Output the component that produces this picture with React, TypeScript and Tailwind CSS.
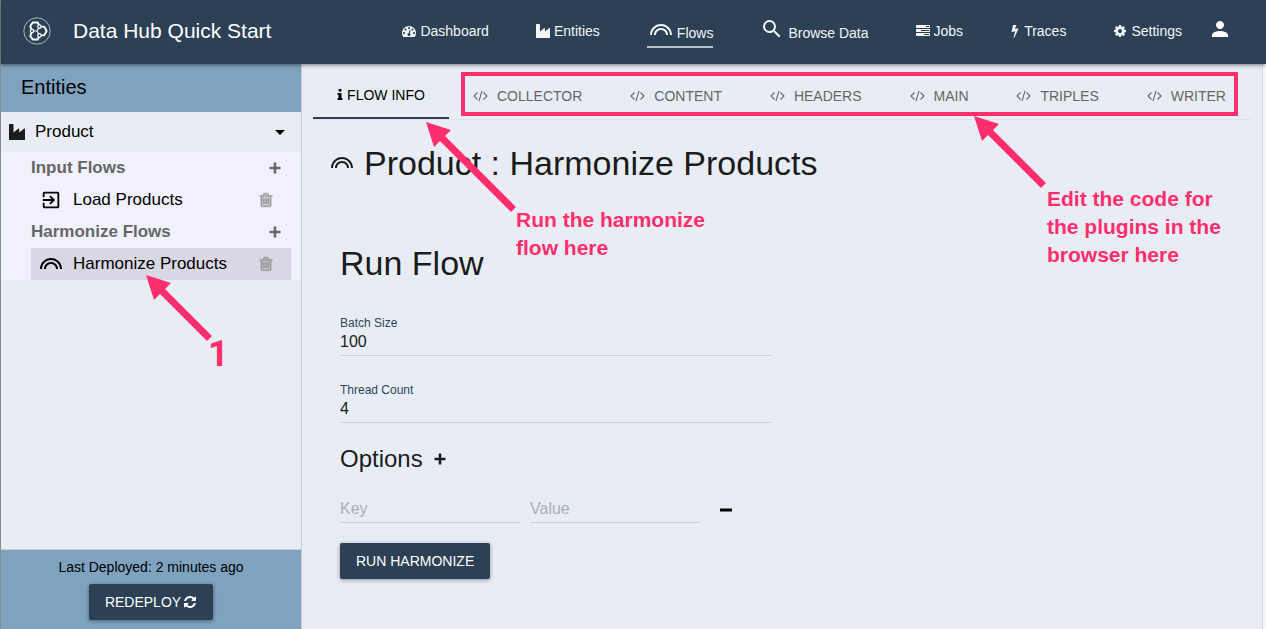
import { MdSearch, MdPerson, MdLooks, MdExitToApp } from "react-icons/md";
import type { ReactNode } from "react";

const FA = {
  dashboard:
    "M384 1152q0-53-37.5-90.5t-90.5-37.5-90.5 37.5-37.5 90.5 37.5 90.5 90.5 37.5 90.5-37.5 37.5-90.5zm192-448q0-53-37.5-90.5t-90.5-37.5-90.5 37.5-37.5 90.5 37.5 90.5 90.5 37.5 90.5-37.5 37.5-90.5zm428 481l101-382q6-26-7.5-48.5t-38.5-29.5-48 6.5-30 39.5l-101 382q-60 5-107 43.5t-63 98.5q-20 77 20 146t117 89 146-20 89-117q16-60-6-117t-72-91zm660-33q0-53-37.5-90.5t-90.5-37.5-90.5 37.5-37.5 90.5 37.5 90.5 90.5 37.5 90.5-37.5 37.5-90.5zm-640-640q0-53-37.5-90.5t-90.5-37.5-90.5 37.5-37.5 90.5 37.5 90.5 90.5 37.5 90.5-37.5 37.5-90.5zm448 192q0-53-37.5-90.5t-90.5-37.5-90.5 37.5-37.5 90.5 37.5 90.5 90.5 37.5 90.5-37.5 37.5-90.5zm320 448q0 261-141 483-19 29-54 29h-1402q-35 0-54-29-141-221-141-483 0-182 71-348t191-286 286-191 348-71 348 71 286 191 191 286 71 348z",
  tasks:
    "M1024 1408h640v-128h-640v128zm-384-512h1024v-128h-1024v128zm640-512h384v-128h-384v128zm512 832v256q0 26-19 45t-45 19h-1664q-26 0-45-19t-19-45v-256q0-26 19-45t45-19h1664q26 0 45 19t19 45zm0-512v256q0 26-19 45t-45 19h-1664q-26 0-45-19t-19-45v-256q0-26 19-45t45-19h1664q26 0 45 19t19 45zm0-512v256q0 26-19 45t-45 19h-1664q-26 0-45-19t-19-45v-256q0-26 19-45t45-19h1664q26 0 45 19t19 45z",
  bolt: "M1333 566q18 20 7 44l-540 1157q-13 25-42 25-4 0-14-2-17-5-25.5-19t-4.5-30l197-808-406 101q-4 1-12 1-18 0-31-11-18-15-13-39l201-825q4-16 16-26t28-10h328q19 0 32 12.5t13 29.5q0 8-5 18l-171 463 396-98q8-2 12-2 19 0 34 15z",
  cog: "M1152 896q0-106-75-181t-181-75-181 75-75 181 75 181 181 75 181-75 75-181zm512-109v222q0 12-8 23t-20 13l-185 28q-19 54-39 91 35 50 107 138 10 12 10 25t-9 23q-27 37-99 108t-94 71q-12 0-26-9l-138-108q-44 23-91 38-16 136-29 186-7 28-36 28h-222q-14 0-24.5-8.5t-11.5-21.5l-28-184q-49-16-90-37l-141 107q-10 9-25 9-14 0-25-11-126-114-165-168-7-10-7-23 0-12 8-23 15-21 51-66.5t54-70.5q-27-50-41-99l-183-27q-13-2-21-12.5t-8-23.5v-222q0-12 8-23t19-13l186-28q14-46 39-92-40-57-107-138-10-12-10-24 0-10 9-23 26-36 98.5-107.5t94.5-71.5q13 0 26 10l138 107q44-23 91-38 16-136 29-186 7-28 36-28h222q14 0 24.5 8.5t11.5 21.5l28 184q49 16 90 37l142-107q9-9 24-9 13 0 25 10 129 119 165 170 7 8 7 22 0 12-8 23-15 21-51 66.5t-54 70.5q26 50 41 98l183 28q13 2 21 12.5t8 23.5z",
  info: "M1216 1344v128q0 26-19 45t-45 19h-512q-26 0-45-19t-19-45v-128q0-26 19-45t45-19h64v-384h-64q-26 0-45-19t-19-45v-128q0-26 19-45t45-19h384q26 0 45 19t19 45v576h64q26 0 45 19t19 45zm-128-1152v192q0 26-19 45t-45 19h-256q-26 0-45-19t-19-45v-192q0-26 19-45t45-19h256q26 0 45 19t19 45z",
  trash:
    "M704 736v576q0 14-9 23t-23 9h-64q-14 0-23-9t-9-23v-576q0-14 9-23t23-9h64q14 0 23 9t9 23zm256 0v576q0 14-9 23t-23 9h-64q-14 0-23-9t-9-23v-576q0-14 9-23t23-9h64q14 0 23 9t9 23zm256 0v576q0 14-9 23t-23 9h-64q-14 0-23-9t-9-23v-576q0-14 9-23t23-9h64q14 0 23 9t9 23zm128 724v-948h-896v948q0 22 7 40.5t14.5 27 10.5 8.5h832q3 0 10.5-8.5t14.5-27 7-40.5zm-672-1076h448l-48-117q-7-9-17-11h-317q-10 2-17 11zm928 32v64q0 14-9 23t-23 9h-96v948q0 83-47 143.5t-113 60.5h-832q-66 0-113-58.5t-47-141.5v-952h-96q-14 0-23-9t-9-23v-64q0-14 9-23t23-9h309l70-167q15-37 54-63t79-26h320q40 0 79 26t54 63l70 167h309q14 0 23 9t9 23z",
  refresh:
    "M1639 1056q0 5-1 7-64 268-268 434.5t-478 166.5q-146 0-282.5-55t-243.5-157l-129 129q-19 19-45 19t-45-19-19-45v-448q0-26 19-45t45-19h448q26 0 45 19t19 45-19 45l-137 137q71 66 161 102t187 36q134 0 250-65t186-179q11-17 53-117 8-23 30-23h192q13 0 22.5 9.5t9.5 22.5zm25-800v448q0 26-19 45t-45 19h-448q-26 0-45-19t-19-45 19-45l138-138q-148-137-349-137-134 0-250 65t-186 179q-11 17-53 117-8 23-30 23h-199q-13 0-22.5-9.5t-9.5-22.5v-7q65-268 270-434.5t480-166.5q146 0 284 55.5t245 156.5l130-129q19-19 45-19t45 19 19 45z",
};

function Fa({ d, className }: { d: string; className: string }) {
  return (
    <svg viewBox="0 0 1792 1792" className={className} fill="currentColor" aria-hidden="true">
      <path d={d} />
    </svg>
  );
}

function Trash() {
  return (
    <svg viewBox="0 0 1792 1792" className="size-4" fill="currentColor" aria-hidden="true">
      <path d="M400 460h992v1120H400z" opacity=".35" />
      <path d={FA.trash} stroke="currentColor" strokeWidth="50" />
    </svg>
  );
}

function Industry({ className }: { className: string }) {
  return (
    <svg viewBox="0 0 16 16" className={className} fill="currentColor" aria-hidden="true">
      <path d="M0 .6Q0 0 .6 0h3.300q.6 0 .6.6v8l5-4q.7-.4.7.4v3.600l5-4q.8-.5.8.4V15.400q0 .6-.6.6H.6q-.6 0-.6-.6z" />
    </svg>
  );
}

function Plus({ className }: { className: string }) {
  return (
    <svg viewBox="0 0 12 12" className={className} fill="currentColor" aria-hidden="true">
      <path d="M4.700.5h2.600v4.200h4.200v2.600H7.300v4.200H4.700V7.300H.5V4.700h4.200z" />
    </svg>
  );
}

function Minus({ className }: { className: string }) {
  return (
    <svg viewBox="0 0 12 12" className={className} fill="currentColor" aria-hidden="true">
      <rect y="4.500" width="12" height="3" rx=".5" />
    </svg>
  );
}

function Code() {
  return (
    <svg viewBox="0 0 15 12" className="h-3 w-[15px]" fill="none" stroke="currentColor" strokeWidth="1.100" aria-hidden="true">
      <path d="M4.500 2.500 1 6l3.500 3.500M10.500 2.500 14 6l-3.500 3.500M9 .8 6 11.200" />
    </svg>
  );
}

function Logo() {
  return (
    <svg viewBox="0 0 28 28" className="size-7 text-white" fill="none" stroke="currentColor" aria-hidden="true">
      <circle cx="14" cy="14" r="13.200" strokeWidth=".8" opacity=".75" />
      <g strokeWidth="1.900" strokeLinejoin="round">
        <path d="M16 8 14.700 5.500H9.700L7.200 9.200 8.500 12.200" />
        <path d="M8.500 15.800 7.200 18.800 9.700 22.500h5L16 20" />
        <path d="M17.800 9.600h3.400L23.600 14l-2.400 4.400h-3.400" />
      </g>
      <path d="M10.500 14H14l1.700-3M14 14l1.700 3" strokeWidth="1.100" />
      <g strokeWidth="1.200" fill="#2c4155">
        <circle cx="9" cy="14" r="1.700" />
        <circle cx="16.400" cy="9.600" r="1.700" />
        <circle cx="16.400" cy="18.400" r="1.700" />
      </g>
    </svg>
  );
}

function NavLink({ icon, label, active, large }: { icon: ReactNode; label: string; active?: boolean; large?: boolean }) {
  return (
    <a
      href="#"
      className={`flex h-8 items-center gap-1 border-b-2 ${active ? "border-[#b9c2ca] pl-[2px]" : "border-transparent"}`}
    >
      {icon}
      <span className={large ? "pt-1" : ""}>{label}</span>
    </a>
  );
}

function FlowRow({ icon, label, selected }: { icon: ReactNode; label: string; selected?: boolean }) {
  return (
    <li className={`mr-[10px] ml-[30px] flex h-8 items-center pr-[17px] pl-2 ${selected ? "bg-[#d8d7e3]" : ""}`}>
      {icon}
      <a href="#" className="ml-[10px] flex-1">{label}</a>
      <button aria-label={`Delete ${label}`} className="text-[#999]">
        <Trash />
      </button>
    </li>
  );
}

function GroupRow({ label }: { label: string }) {
  return (
    <div className="flex h-8 items-center pr-5 pl-[30px] font-bold text-[#666]">
      <h3 className="flex-1">{label}</h3>
      <button aria-label={`Add to ${label}`}>
        <Plus className="size-3" />
      </button>
    </div>
  );
}

function Field({ id, label, value }: { id: string; label: string; value: string }) {
  return (
    <div className="flex w-[432px] flex-col">
      <label htmlFor={id} className="text-xs leading-4 text-[#2c4459]">{label}</label>
      <input id={id} defaultValue={value} className="h-[25px] border-b border-[#cdd1d8] bg-transparent pb-[2px] outline-none" />
    </div>
  );
}

function Arrow({ size, className }: { size: number; className: string }) {
  return (
    <svg width={size} height={size} className={`absolute z-20 text-[#ff2e6d] ${className}`} fill="currentColor" aria-hidden="true">
      <path d={`M0 0 25 8 19 14 ${size} ${size - 5} ${size - 5} ${size} 14 19 8 25z`} />
    </svg>
  );
}

const tabs = ["COLLECTOR", "CONTENT", "HEADERS", "MAIN", "TRIPLES", "WRITER"];

export default function App() {
  return (
    <div className="relative flex min-h-screen flex-col border-l border-[#8a8d90] bg-[#e8edf5] font-['Liberation_Sans',Arial,sans-serif] text-base text-[#1b1b1b]">
      <header className="relative z-10 flex h-16 items-center bg-[#2c4155] pr-[34px] pb-[2px] pl-[22px] text-[#f3f5f7] shadow-[0_1px_4px_rgba(0,0,0,0.5)]">
        <Logo />
        <h1 className="ml-[22px] text-[21px] text-white">Data Hub Quick Start</h1>
        <nav className="ml-auto flex items-center gap-[47px] pt-[2px] text-sm">
          <NavLink icon={<Fa d={FA.dashboard} className="size-[14px]" />} label="Dashboard" />
          <NavLink icon={<Industry className="size-[14px]" />} label="Entities" />
          <NavLink icon={<MdLooks className="mb-[2px] size-6" />} label="Flows" active large />
          <NavLink icon={<MdSearch className="mb-1 size-6" />} label="Browse Data" large />
          <NavLink icon={<Fa d={FA.tasks} className="size-[14px]" />} label="Jobs" />
          <NavLink icon={<Fa d={FA.bolt} className="-mx-[2px] size-[14px]" />} label="Traces" />
          <NavLink icon={<Fa d={FA.cog} className="size-[14px]" />} label="Settings" />
        </nav>
        <button aria-label="Account" className="ml-[26px] pb-1">
          <MdPerson className="size-6 text-white" />
        </button>
      </header>

      <div className="flex flex-1">
        <aside className="flex w-[301px] shrink-0 flex-col border-r border-[#c9cdd4] bg-[#e8edf3] text-[17px] text-black">
          <h2 className="flex h-12 items-center bg-[#7fa3bf] px-5 pb-[2px] text-xl">Entities</h2>
          <div className="flex h-10 items-center pr-4 pl-2">
            <Industry className="size-4 text-[#1b1b1b]" />
            <span className="ml-[10px] flex-1">Product</span>
            <button aria-label="Collapse Product">
              <svg viewBox="0 0 10 5" className="h-[5px] w-[10px]" fill="currentColor" aria-hidden="true">
                <path d="M0 0h10L5 5z" />
              </svg>
            </button>
          </div>
          <div className="bg-[#f1f1fd]">
            <GroupRow label="Input Flows" />
            <ul>
              <FlowRow icon={<MdExitToApp className="size-6 p-px" />} label="Load Products" />
            </ul>
            <GroupRow label="Harmonize Flows" />
            <ul>
              <FlowRow icon={<MdLooks className="size-6" />} label="Harmonize Products" selected />
            </ul>
          </div>
          <footer className="mt-auto flex h-20 flex-col items-center border-t border-[#c9cdd4] bg-[#7fa3bf] pt-[7px]">
            <p className="text-sm leading-5">Last Deployed: 2 minutes ago</p>
            <button className="mt-[7px] flex h-9 items-center gap-[2px] rounded-xs bg-[#2c4155] px-4 text-sm text-white shadow-[0_1px_4px_rgba(0,0,0,0.4)]">
              REDEPLOY
              <Fa d={FA.refresh} className="size-[14px]" />
            </button>
          </footer>
        </aside>

        <main className="min-w-0 flex-1 border-r border-[#d5d8dd] pr-[10px] pl-[11px]">
          <div role="tablist" className="flex h-14 items-end border-b border-[#dfe2e6] text-sm text-[#666]">
            <button role="tab" aria-selected="true" className="flex h-12 w-[136px] shrink-0 items-center justify-center border-b-2 border-[#2c4155] pt-[2px] pr-1 text-black">
              <Fa d={FA.info} className="size-[14px]" />
              FLOW INFO
            </button>
            <div className="mr-[14px] mb-[3px] ml-3 flex h-11 flex-1 items-center justify-between border-4 border-[#ff2e6d] px-2 pt-1">
              {tabs.map((t) => (
                <button key={t} role="tab" aria-selected="false" className="flex items-center gap-[9px]">
                  <Code />
                  {t}
                </button>
              ))}
            </div>
          </div>

          <h2 className="mt-[19px] ml-[17px] flex items-center gap-[10px] text-[34px] leading-[48px]">
            <MdLooks className="size-6" />
            Product : Harmonize Products
          </h2>

          <section className="mt-[52px] ml-[27px]">
            <h2 className="text-[34px] leading-[48px]">Run Flow</h2>
            <div className="mt-7 flex flex-col gap-[26px]">
              <Field id="batch" label="Batch Size" value="100" />
              <Field id="threads" label="Thread Count" value="4" />
            </div>
            <h3 className="mt-5 flex items-center gap-[11px] text-2xl">
              Options
              <button aria-label="Add option">
                <Plus className="size-3" />
              </button>
            </h3>
            <div className="mt-[21px] flex items-center">
              <input aria-label="Key" placeholder="Key" className="h-[27px] w-[180px] border-b border-[#cdd1d8] bg-transparent outline-none placeholder:text-[#acafb4]" />
              <input aria-label="Value" placeholder="Value" className="ml-[10px] h-[27px] w-[170px] border-b border-[#cdd1d8] bg-transparent outline-none placeholder:text-[#acafb4]" />
              <button aria-label="Remove option" className="ml-5 text-black">
                <Minus className="size-3" />
              </button>
            </div>
            <button className="mt-5 h-9 rounded-xs bg-[#2c4155] px-4 text-sm text-white shadow-[0_1px_4px_rgba(0,0,0,0.4)]">
              RUN HARMONIZE
            </button>
          </section>
        </main>
        <div className="w-[3px] bg-[#f5f6f7]" />
      </div>

      <Arrow size={90} className="top-[122px] left-[425px]" />
      <p className="absolute top-[206px] left-[515px] z-20 w-52 text-[21px] leading-[28px] font-bold text-[#ff2e6d]">Run the harmonize flow here</p>
      <Arrow size={72} className="top-[116px] left-[973px]" />
      <p className="absolute top-[185px] left-[1046px] z-20 w-48 text-[21px] leading-[28px] font-bold text-[#ff2e6d]">Edit the code for the plugins in the browser here</p>
      <Arrow size={66} className="top-[275px] left-[145px]" />
      <p className="absolute top-[334px] left-[207px] z-20 font-['Roboto',sans-serif] text-4xl leading-10 font-bold text-[#ff2e6d]">1</p>
    </div>
  );
}
